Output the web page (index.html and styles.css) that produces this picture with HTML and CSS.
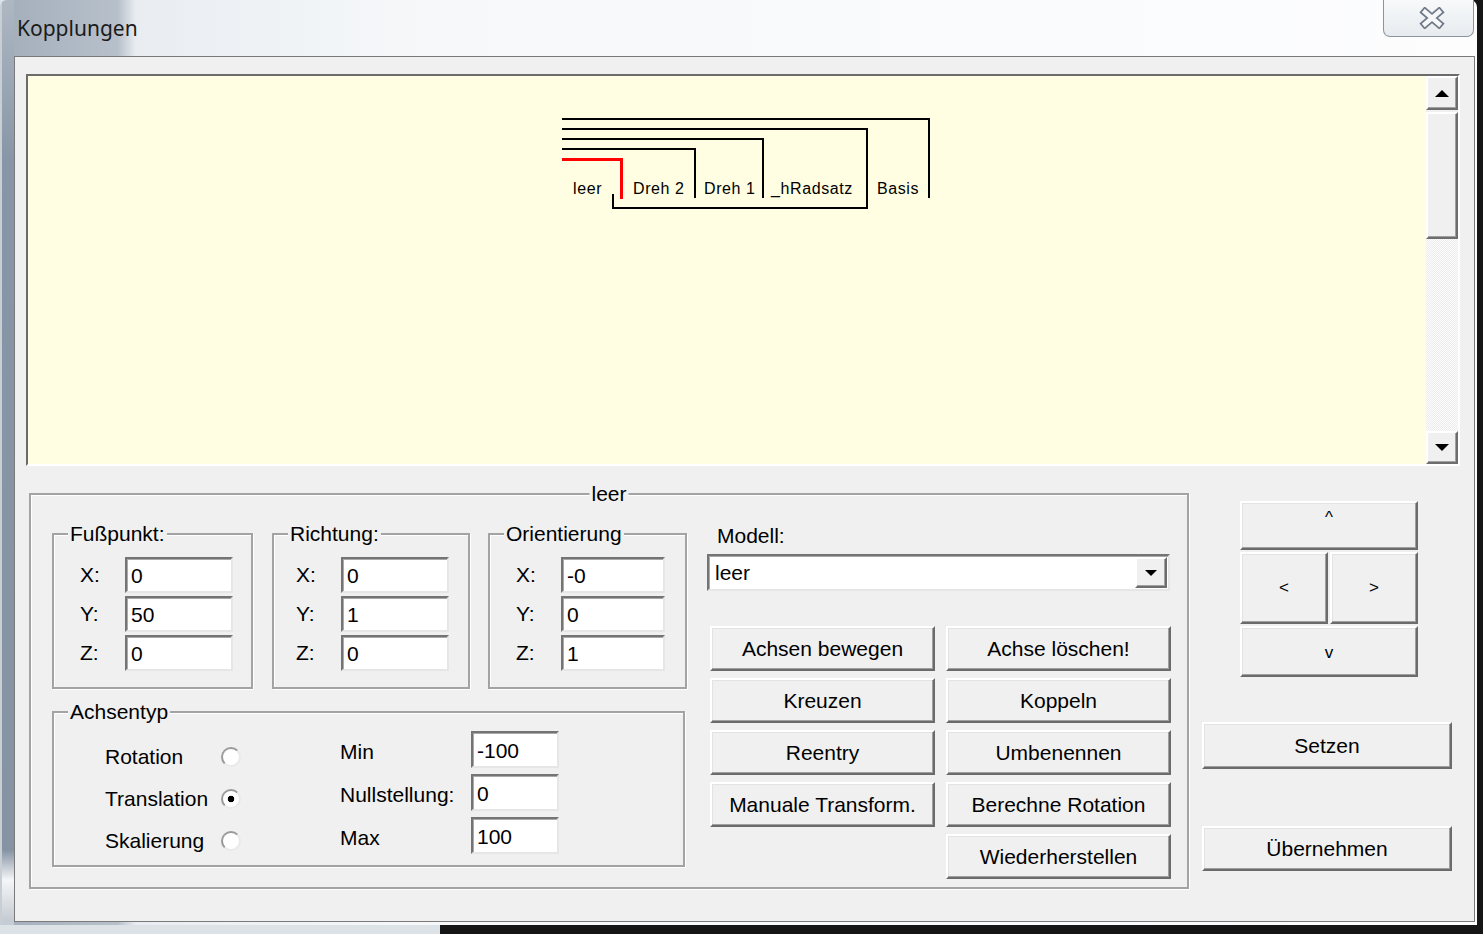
FILE: index.html
```html
<!DOCTYPE html>
<html lang="de">
<head>
  <meta charset="UTF-8" />
  <title>Kopplungen</title>
  <link rel="stylesheet" href="styles.css">
</head>
<body>
  <div class="window">
    <div class="titlebar">
      <span class="title">Kopplungen</span>
      <button class="close-btn" aria-label="Schließen">
        <svg width="26" height="22" viewBox="0 0 26 22">
          <path d="M6 5 L20 17 M20 5 L6 17" stroke="#6f7986" stroke-width="8" stroke-linecap="square" fill="none"/>
          <path d="M6 5 L20 17 M20 5 L6 17" stroke="#f5f7f9" stroke-width="4.5" stroke-linecap="square" fill="none"/>
        </svg>
      </button>
    </div>

    <div class="client">
      <div class="canvas">
        <div class="canvas-area">
          <svg class="tree" width="1398" height="388" viewBox="0 0 1398 388">
            <g fill="none" stroke="#000" stroke-width="2" shape-rendering="crispEdges">
              <path d="M534 43 H901 V122"/>
              <path d="M534 53 H839 V132 H585 V118"/>
              <path d="M534 63 H735 V122"/>
              <path d="M534 73 H667 V122"/>
            </g>
            <path d="M534 83 H593 V123" fill="none" stroke="#f00" stroke-width="3" shape-rendering="crispEdges"/>
            <g class="tree-labels">
              <text x="545" y="118">leer</text>
              <text x="605" y="118">Dreh 2</text>
              <text x="676" y="118">Dreh 1</text>
              <text x="743" y="118">_hRadsatz</text>
              <text x="849" y="118">Basis</text>
            </g>
          </svg>
        </div>
        <div class="vscroll">
          <div class="sb-btn"><span class="tri-up"></span></div>
          <div class="sb-thumb"></div>
          <div class="sb-track"></div>
          <div class="sb-btn"><span class="tri-down"></span></div>
        </div>
      </div>

      <div class="bottom">
        <div class="group main-group">
          <span class="caption caption-center">leer</span>

          <div class="left-col">
            <div class="vec-row">
              <div class="group vec vec-foot">
                <span class="caption">Fußpunkt:</span>
                <div class="vec-line"><span class="vec-label">X:</span><input class="field" value="0"></div>
                <div class="vec-line"><span class="vec-label">Y:</span><input class="field" value="50"></div>
                <div class="vec-line"><span class="vec-label">Z:</span><input class="field" value="0"></div>
              </div>
              <div class="group vec vec-dir">
                <span class="caption">Richtung:</span>
                <div class="vec-line"><span class="vec-label">X:</span><input class="field" value="0"></div>
                <div class="vec-line"><span class="vec-label">Y:</span><input class="field" value="1"></div>
                <div class="vec-line"><span class="vec-label">Z:</span><input class="field" value="0"></div>
              </div>
              <div class="group vec vec-orient">
                <span class="caption">Orientierung</span>
                <div class="vec-line"><span class="vec-label">X:</span><input class="field" value="-0"></div>
                <div class="vec-line"><span class="vec-label">Y:</span><input class="field" value="0"></div>
                <div class="vec-line"><span class="vec-label">Z:</span><input class="field" value="1"></div>
              </div>
            </div>

            <div class="group axis-type">
              <span class="caption">Achsentyp</span>
              <div class="radio-list">
                <label class="radio-line"><span>Rotation</span><input type="radio" name="typ" class="radio"></label>
                <label class="radio-line"><span>Translation</span><input type="radio" name="typ" class="radio" checked></label>
                <label class="radio-line"><span>Skalierung</span><input type="radio" name="typ" class="radio"></label>
              </div>
              <div class="limits">
                <div class="limit-line"><span class="limit-label">Min</span><input class="field limit-field" value="-100"></div>
                <div class="limit-line"><span class="limit-label">Nullstellung:</span><input class="field limit-field" value="0"></div>
                <div class="limit-line"><span class="limit-label">Max</span><input class="field limit-field" value="100"></div>
              </div>
            </div>
          </div>

          <div class="mid-col">
            <span class="model-label">Modell:</span>
            <div class="combo">
              <span class="combo-text">leer</span>
              <span class="combo-btn"><span class="tri-down small"></span></span>
            </div>
            <div class="btn-grid">
              <button class="btn">Achsen bewegen</button>
              <button class="btn">Achse löschen!</button>
              <button class="btn">Kreuzen</button>
              <button class="btn">Koppeln</button>
              <button class="btn">Reentry</button>
              <button class="btn">Umbenennen</button>
              <button class="btn">Manuale Transform.</button>
              <button class="btn">Berechne Rotation</button>
              <button class="btn btn-col2">Wiederherstellen</button>
            </div>
          </div>
        </div>

        <div class="right-col">
          <div class="arrow-pad">
            <button class="btn arrow arrow-wide">^</button>
            <button class="btn arrow">&lt;</button>
            <button class="btn arrow">&gt;</button>
            <button class="btn arrow arrow-wide arrow-down">v</button>
          </div>
          <button class="btn btn-set">Setzen</button>
          <button class="btn btn-apply">Übernehmen</button>
        </div>
      </div>
    </div>
  </div>
</body>
</html>
```

FILE: styles.css
```css
* {
  box-sizing: border-box;
}
html, body {
  margin: 0;
  height: 934px;
  overflow: hidden;
}
body {
  background: linear-gradient(to right, #dde2e7 440px, #151515 440px);
  font-family: "Liberation Sans", Arial, sans-serif;
  font-size: 21px;
  color: #000;
}

/* window frame */
.window {
  width: 1477px;
  height: 925px;
  border-radius: 7px 7px 0 0;
  background:
    linear-gradient(to right, #c9ced4 0 2px, transparent 2px) 0 0 / 14px 100% no-repeat,
    linear-gradient(to bottom, #aeb8c3 0, #8796a6 160px, #8593a3 850px, #f4f6f8 880px, #c6ccd3 920px) 0 0 / 14px 100% no-repeat,
    linear-gradient(to right, #a3aebb 0, #b7c0ca 118px, #e9edf1 136px, #f6f8fa 420px, #fdfdfe 100%);
}
.titlebar {
  height: 56px;
  display: flex;
  justify-content: space-between;
  align-items: flex-start;
}
.title {
  font-family: "Noto Sans", "Open Sans", sans-serif;
  font-size: 21px;
  line-height: 56px;
  margin-left: 17px;
  color: #1b1b1b;
}
.close-btn {
  width: 91px;
  height: 37px;
  margin-right: 3px;
  border: 1px solid #8a95a1;
  border-top: none;
  border-radius: 0 0 7px 7px;
  background: linear-gradient(#f7f9fa, #e7ebef);
  display: flex;
  align-items: center;
  justify-content: center;
  padding: 0 0 0 6px;
}

.client {
  margin-left: 14px;
  width: 1461px;
  height: 866px;
  border: 1px solid #7a7a7a;
  background: #f0f0f0;
  padding: 17px 14px 0 11px;
}

/* drawing area */
.canvas {
  height: 392px;
  display: flex;
  border: 2px solid;
  border-color: #6b6b6b #fff #fff #6b6b6b;
}
.canvas-area {
  flex: 1;
  background: #fffee2;
  overflow: hidden;
}
.tree {
  display: block;
}
.tree-labels text {
  font-family: "Liberation Sans", Arial, sans-serif;
  font-size: 16px;
  letter-spacing: 0.6px;
  fill: #000;
}
.vscroll {
  width: 32px;
  display: flex;
  flex-direction: column;
}
.sb-btn {
  height: 34px;
  background: #f0f0f0;
  border: 2px solid;
  border-color: #fff #6d6d6d #6d6d6d #fff;
  box-shadow: inset -1px -1px 0 #a0a0a0;
  display: flex;
  align-items: center;
  justify-content: center;
}
.sb-btn:last-child {
  height: 33px;
}
.sb-thumb {
  height: 127px;
  margin-top: 2px;
  background: #f0f0f0;
  border: 2px solid;
  border-color: #fff #6d6d6d #6d6d6d #fff;
  box-shadow: inset -1px -1px 0 #a0a0a0;
}
.sb-track {
  flex: 1;
  background: repeating-conic-gradient(#fdfdfd 0 25%, #ececec 0 50%) 0 0 / 2px 2px;
}
.tri-up {
  width: 0;
  height: 0;
  border-left: 7px solid transparent;
  border-right: 7px solid transparent;
  border-bottom: 7px solid #000;
}
.tri-down {
  width: 0;
  height: 0;
  border-left: 7px solid transparent;
  border-right: 7px solid transparent;
  border-top: 7px solid #000;
}
.tri-down.small {
  border-left-width: 6px;
  border-right-width: 6px;
  border-top-width: 6px;
}

/* lower part */
.bottom {
  display: flex;
  align-items: flex-start;
  padding: 27px 0 0 3px;
}
.group {
  position: relative;
  border: 2px solid #a3a3a3;
  box-shadow: 1px 1px 0 #fff, inset 1px 1px 0 #fff;
}
.caption {
  position: absolute;
  top: -13px;
  left: 14px;
  padding: 0 2px;
  line-height: 24px;
  background: #f0f0f0;
  white-space: nowrap;
}
.caption-center {
  left: 50%;
  transform: translateX(-50%);
}
.main-group {
  width: 1160px;
  height: 396px;
  padding: 38px 0 0 21px;
  display: flex;
  align-items: flex-start;
}
.left-col {
  width: 635px;
}
.vec-row {
  display: flex;
  gap: 19px;
}
.vec {
  height: 156px;
  padding: 22px 0 0 26px;
  display: flex;
  flex-direction: column;
  gap: 3px;
}
.vec-foot { width: 201px; }
.vec-dir { width: 198px; padding-left: 22px; margin-right: -1px; }
.vec-orient { width: 199px; padding-left: 26px; }
.vec-line {
  display: flex;
  align-items: center;
  height: 36px;
}
.vec-label {
  width: 45px;
}
.field {
  width: 108px;
  height: 36px;
  border: 2px solid;
  border-color: #747474 #e6e6e6 #e6e6e6 #747474;
  box-shadow: inset 1px 1px 0 #a9a9a9;
  background: #fff;
  font: 21px "Liberation Sans", Arial, sans-serif;
  color: #000;
  padding: 2px 0 0 4px;
  outline: none;
}
.vec-orient .field {
  width: 104px;
}

.axis-type {
  width: 633px;
  height: 156px;
  margin-top: 22px;
  display: flex;
  align-items: flex-start;
}
.radio-list {
  margin: 23px 0 0 51px;
  display: flex;
  flex-direction: column;
}
.radio-line {
  height: 42px;
  display: flex;
  align-items: center;
}
.radio-line span {
  width: 116px;
}
.radio {
  appearance: none;
  margin: 0;
  width: 20px;
  height: 20px;
  border-radius: 50%;
  border: 2px solid;
  border-color: #9a9a9a #e9e9e9 #e9e9e9 #9a9a9a;
  background: #fff;
}
.radio:checked {
  background: radial-gradient(circle, #000 0 3px, #fff 3.6px);
}
.limits {
  margin: 18px 0 0 99px;
  display: flex;
  flex-direction: column;
  gap: 6px;
}
.limit-line {
  display: flex;
  align-items: center;
}
.limit-label {
  width: 131px;
  padding-top: 4px;
}
.limit-field {
  width: 88px;
  height: 37px;
}

.mid-col {
  width: 464px;
  margin-left: 20px;
  display: flex;
  flex-direction: column;
}
.model-label {
  margin: -9px 0 0 10px;
  line-height: 24px;
}
.combo {
  margin-top: 6px;
  width: 463px;
  height: 37px;
  border: 2px solid;
  border-color: #747474 #e6e6e6 #e6e6e6 #747474;
  box-shadow: inset 1px 1px 0 #a9a9a9;
  background: #fff;
  display: flex;
  align-items: center;
  justify-content: space-between;
  padding: 0 1px 0 6px;
}
.combo-btn {
  width: 32px;
  height: 31px;
  background: #f0f0f0;
  border: 2px solid;
  border-color: #fff #6d6d6d #6d6d6d #fff;
  box-shadow: inset -1px -1px 0 #a0a0a0;
  display: flex;
  align-items: center;
  justify-content: center;
}
.btn-grid {
  margin: 35px 0 0 3px;
  display: grid;
  grid-template-columns: 225px 225px;
  grid-auto-rows: 45px;
  column-gap: 11px;
  row-gap: 7px;
}
.btn {
  background: #f0f0f0;
  border: 2px solid;
  border-color: #fff #6b6b6b #6b6b6b #fff;
  box-shadow: inset -1px -1px 0 #a0a0a0, inset 1px 1px 0 #e3e3e3;
  font: 21px "Liberation Sans", Arial, sans-serif;
  color: #000;
  padding: 0;
  white-space: nowrap;
}
.btn-col2 {
  grid-column: 2;
}

.right-col {
  width: 250px;
  margin-left: 13px;
  display: flex;
  flex-direction: column;
}
.arrow-pad {
  margin: 8px 0 0 38px;
  width: 178px;
  display: grid;
  grid-template-columns: 88px 88px;
  grid-template-rows: 49px 72px 51px;
  gap: 2px;
}
.arrow {
  font-size: 17px;
}
.arrow-wide {
  grid-column: 1 / 3;
  padding-bottom: 16px;
}
.arrow-down {
  padding-bottom: 0;
  padding-top: 2px;
}
.btn-set {
  margin-top: 45px;
  height: 47px;
}
.btn-apply {
  margin-top: 57px;
  height: 45px;
}
```
